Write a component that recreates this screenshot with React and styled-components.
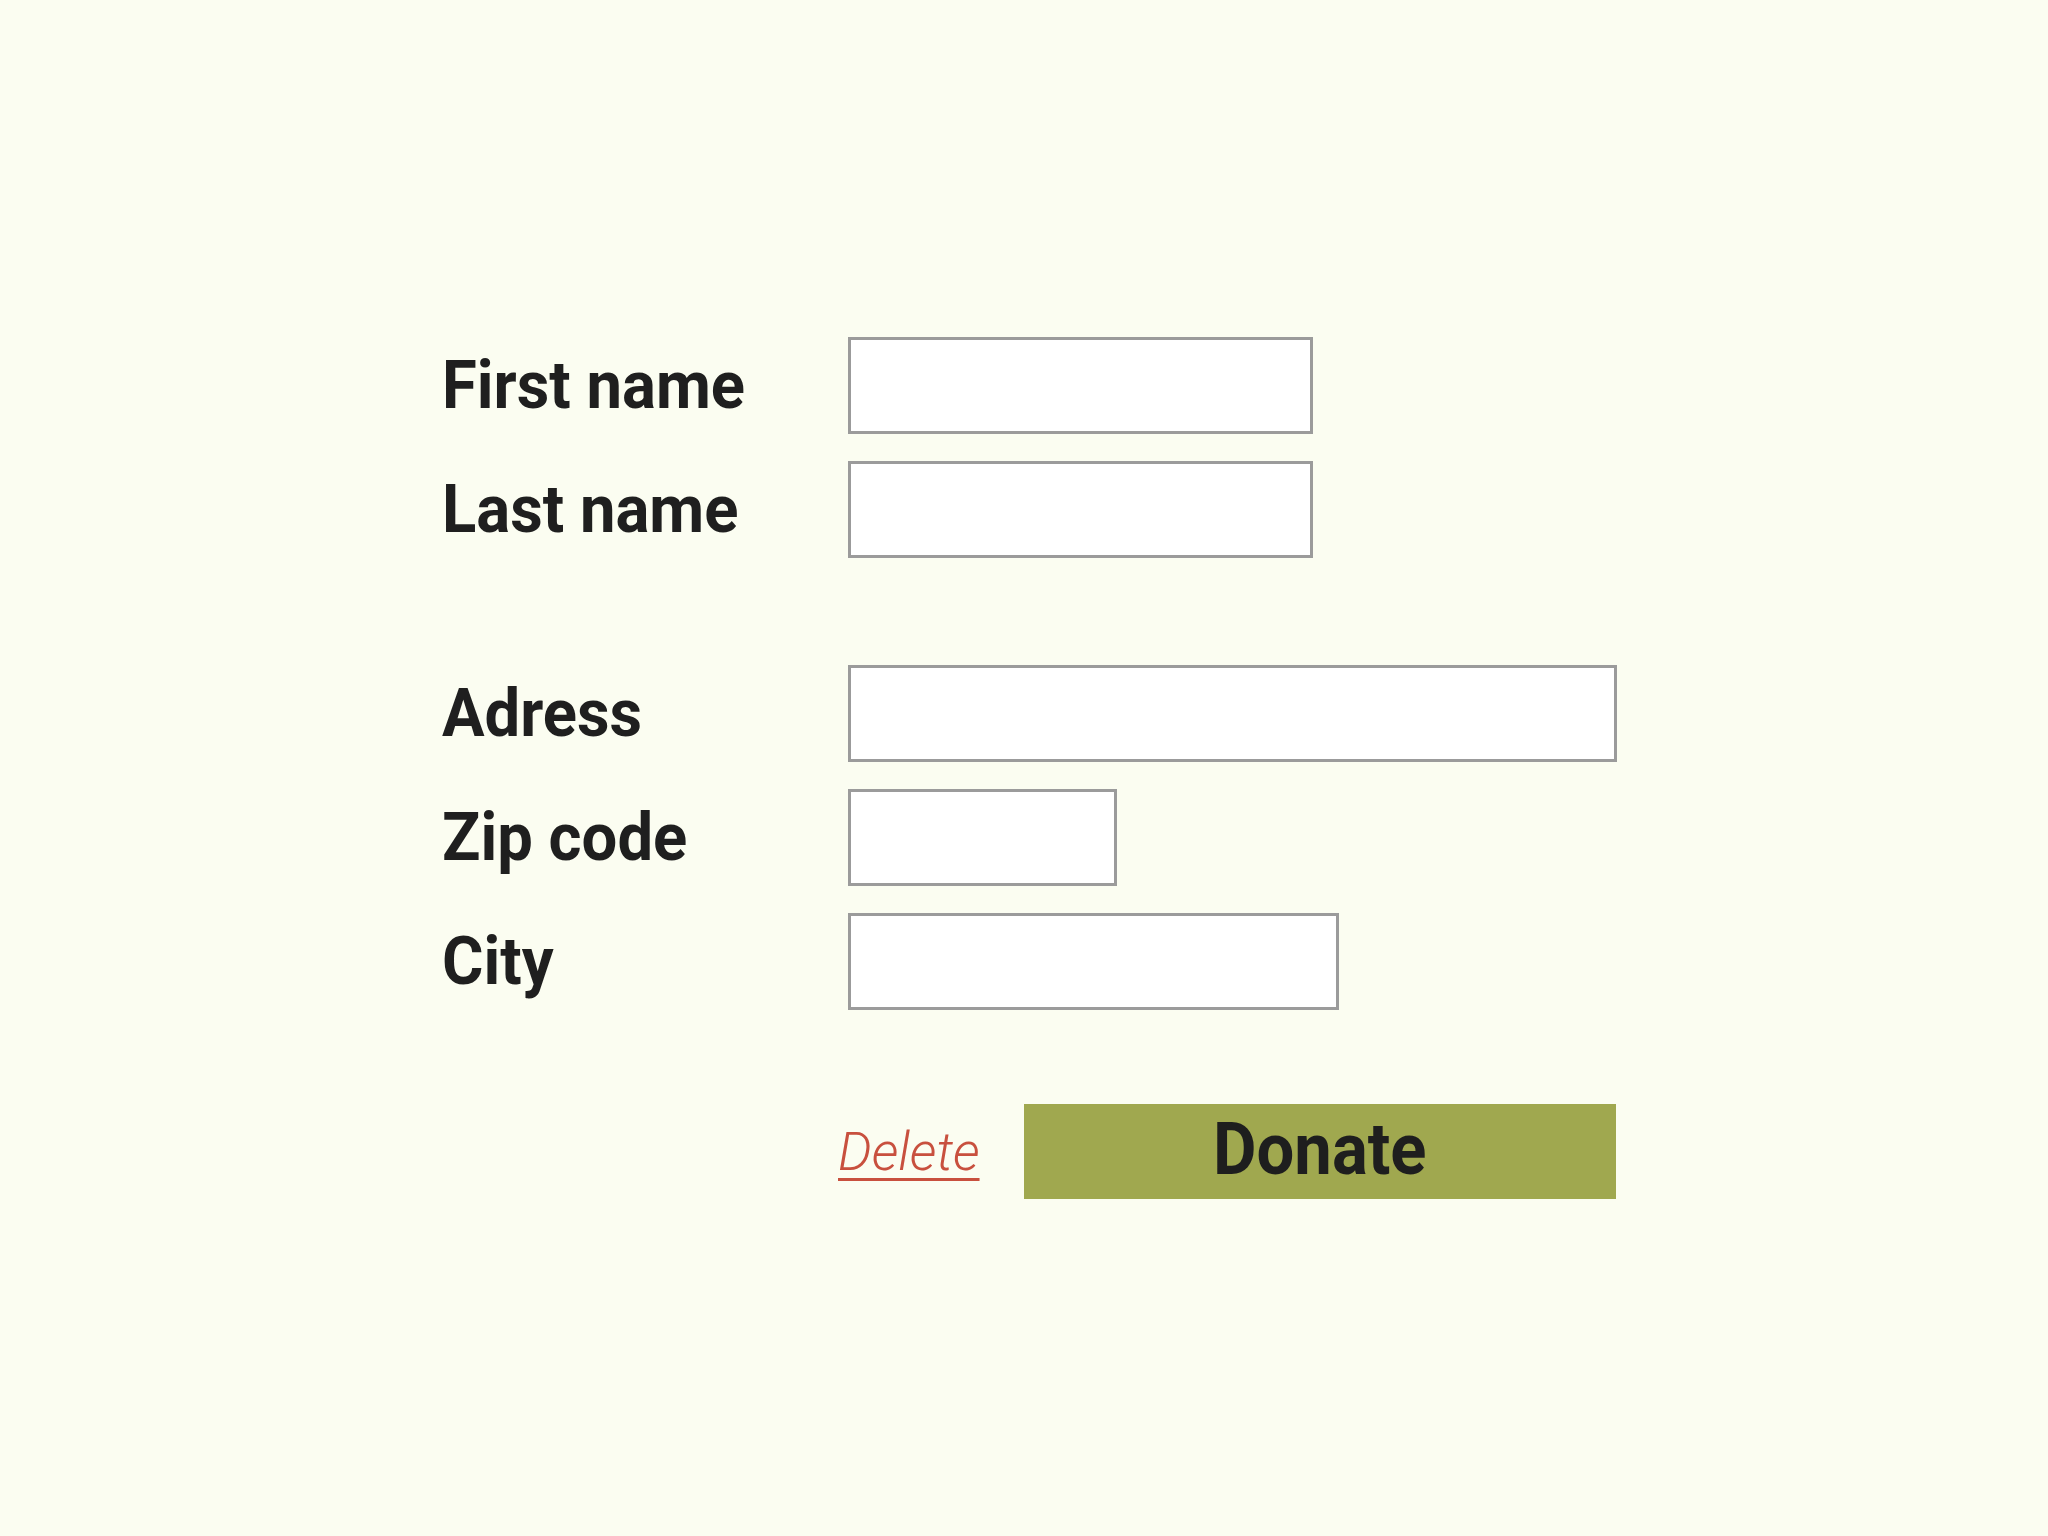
import React from "react";
import styled, { createGlobalStyle } from "styled-components";

const GlobalStyle = createGlobalStyle`
  html, body {
    margin: 0;
    padding: 0;
    background: #fbfdf1;
  }
  body {
    font-family: Roboto, "Liberation Sans", Arial, sans-serif;
    color: #222;
  }
`;

const Page = styled.div`
  min-height: 1536px;
  box-sizing: border-box;
  padding: 337px 0 0 442px;
  background: #fbfdf1;
`;

const Form = styled.form`
  display: flex;
  flex-direction: column;
  gap: 107px;
`;

const Section = styled.div`
  display: flex;
  flex-direction: column;
  gap: 27px;
`;

const Row = styled.div`
  display: flex;
  align-items: center;
`;

/* slightly condensed rendering of the label face */
const Label = styled.label`
  width: 406px;
  flex: none;
  font-family: Roboto, "Liberation Sans", sans-serif;
  font-size: 66px;
  line-height: 1;
  font-weight: 700;
  color: #1f1f1f;
  white-space: nowrap;
  transform: scaleX(0.96);
  transform-origin: left center;
`;

const Field = styled.input`
  box-sizing: border-box;
  width: ${(p) => p.$w}px;
  height: 97px;
  margin: 0;
  padding: 0 16px;
  background: #ffffff;
  border: 3px solid #9b9b9b;
  border-radius: 0;
  font: inherit;
  font-size: 40px;
  outline: none;
`;

const Actions = styled.div`
  display: flex;
  align-items: center;
  gap: 42px;
  margin-top: -13px;
  padding-left: 396px;
`;

const DeleteLink = styled.a`
  display: inline-block;
  width: 144px;
  box-sizing: border-box;
  font-family: Roboto, "Liberation Sans", sans-serif;
  font-size: 53px;
  font-style: italic;
  font-weight: 300;
  color: #c8503e;
  white-space: nowrap;
  text-decoration: underline;
  text-decoration-thickness: 3px;
  text-underline-offset: 8px;
  cursor: pointer;
`;

const DonateButton = styled.button`
  width: 592px;
  height: 95px;
  padding: 0;
  border: none;
  border-radius: 0;
  background: #a0a84f;
  color: #1e1e1e;
  font-family: Roboto, "Liberation Sans", sans-serif;
  font-size: 72px;
  font-weight: 700;
  line-height: 1;
  cursor: pointer;
`;

const DonateText = styled.span`
  display: inline-block;
  transform: scaleX(0.93) translateY(-2px);
`;

const fields = [
  [
    { id: "first", label: "First name", w: 465 },
    { id: "last", label: "Last name", w: 465 },
  ],
  [
    { id: "address", label: "Adress", w: 769 },
    { id: "zip", label: "Zip code", w: 269 },
    { id: "city", label: "City", w: 491 },
  ],
];

export default function App() {
  return (
    <>
      <GlobalStyle />
      <Page>
        <Form onSubmit={(e) => e.preventDefault()}>
          {fields.map((group, i) => (
            <Section key={i}>
              {group.map((f) => (
                <Row key={f.id}>
                  <Label htmlFor={f.id}>{f.label}</Label>
                  <Field id={f.id} $w={f.w} type="text" />
                </Row>
              ))}
            </Section>
          ))}
          <Actions>
            <DeleteLink>Delete</DeleteLink>
            <DonateButton type="submit">
              <DonateText>Donate</DonateText>
            </DonateButton>
          </Actions>
        </Form>
      </Page>
    </>
  );
}
